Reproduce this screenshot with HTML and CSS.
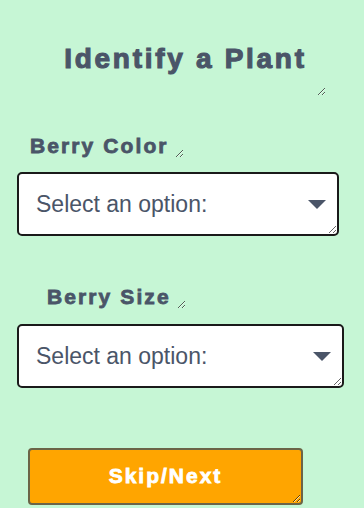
FILE: index.html
```html
<!DOCTYPE html>
<html>
<head>
    <meta charset="UTF-8">
    <meta name="viewport" content="width=device-width, initial-scale=1.0">
    <title>Identify a Plant</title>
    <link rel="stylesheet" href="styles.css">
</head>
<body>
    <div class="page">
        <h1 class="title">Identify a Plant</h1>

        <div class="field field-color">
            <label class="field-label" for="berryColor">Berry Color</label>
            <div class="select-box select-color">
                <select id="berryColor">
                    <option>Select an option:</option>
                    <option>Red</option>
                    <option>Blue</option>
                    <option>Black</option>
                    <option>White</option>
                </select>
                <svg class="arrow" width="18" height="9" viewBox="0 0 18 9"><path d="M0 0h18L9 9z" fill="#4a5568"/></svg>
            </div>
        </div>

        <div class="field field-size">
            <label class="field-label" for="berrySize">Berry Size</label>
            <div class="select-box select-size">
                <select id="berrySize">
                    <option>Select an option:</option>
                    <option>Small</option>
                    <option>Medium</option>
                    <option>Large</option>
                </select>
                <svg class="arrow" width="18" height="9" viewBox="0 0 18 9"><path d="M0 0h18L9 9z" fill="#4a5568"/></svg>
            </div>
        </div>

        <button class="next-button">Skip/Next</button>
    </div>
</body>
</html>
```

FILE: styles.css
```css
body {
    margin: 0;
    padding: 0;
    min-height: 100vh;
    background-color: #c6f6d5;
    font-family: "Liberation Sans", Arial, sans-serif;
    color: #4a5568;
}
.page {
    padding-top: 34px;
}
.title {
    display: block;
    width: 281px;
    margin: 0 0 0 45px;
    padding: 8px 0 20px;
    font-size: 28px;
    line-height: 1.2;
    font-weight: bold;
    letter-spacing: 2.7px;
    -webkit-text-stroke: 1.1px #4a5568;
    text-align: center;
    resize: both;
    overflow: hidden;
}
.field-label {
    display: block;
    width: fit-content;
    padding-right: 15px;
    font-size: 21px;
    line-height: 1.2;
    font-weight: bold;
    letter-spacing: 2.1px;
    -webkit-text-stroke: 0.8px #4a5568;
    resize: both;
    overflow: hidden;
}
.field-color {
    margin-top: 37px;
}
.field-color .field-label {
    margin-left: 30px;
}
.field-size {
    margin-top: 48px;
}
.field-size .field-label {
    margin-left: 47px;
}
.select-box {
    position: relative;
    box-sizing: border-box;
    height: 64px;
    margin-left: 17px;
    background: white;
    border: 2px solid #1a1a1a;
    border-radius: 5px;
    resize: both;
    overflow: hidden;
}
.select-color {
    width: 322px;
    margin-top: 14px;
}
.select-size {
    width: 327px;
    margin-top: 15px;
}
.select-box select {
    width: 100%;
    height: 100%;
    padding: 0 0 0 17px;
    border: none;
    background: transparent;
    appearance: none;
    -webkit-appearance: none;
    font-family: "Liberation Sans", Arial, sans-serif;
    font-size: 23px;
    color: #4a5568;
    outline: none;
}
.arrow {
    position: absolute;
    right: 11px;
    top: 26px;
    pointer-events: none;
}
.next-button {
    display: block;
    box-sizing: border-box;
    width: 275px;
    height: 57px;
    margin: 60px 0 0 28px;
    background-color: #ffa500;
    border: 2px solid #6b6447;
    border-radius: 4px;
    color: white;
    font-family: "Liberation Sans", Arial, sans-serif;
    font-size: 21px;
    font-weight: bold;
    letter-spacing: 2px;
    -webkit-text-stroke: 0.8px white;
    cursor: pointer;
    resize: both;
    overflow: hidden;
}
```
